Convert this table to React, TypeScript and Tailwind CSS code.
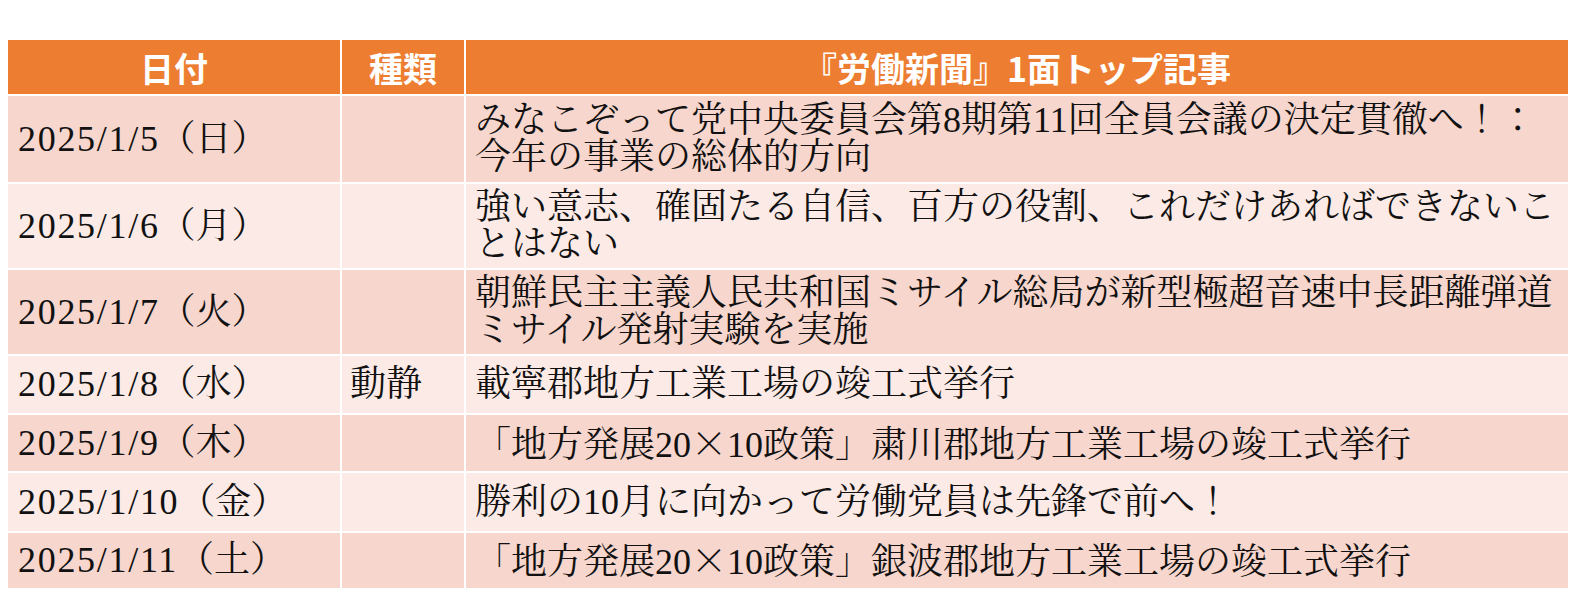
const rows = [
  {
    date: "2025/1/5",
    day: "（日）",
    kind: "",
    lines: ["みなこぞって党中央委員会第8期第11回全員会議の決定貫徹へ！：", "今年の事業の総体的方向"],
    h: "h-[86px]",
    bg: "bg-[#f7d6cd]",
  },
  {
    date: "2025/1/6",
    day: "（月）",
    kind: "",
    lines: ["強い意志、確固たる自信、百方の役割、これだけあればできないこ", "とはない"],
    h: "h-[84px]",
    bg: "bg-[#fbeae6]",
  },
  {
    date: "2025/1/7",
    day: "（火）",
    kind: "",
    lines: ["朝鮮民主主義人民共和国ミサイル総局が新型極超音速中長距離弾道", "ミサイル発射実験を実施"],
    h: "h-[84px]",
    bg: "bg-[#f7d6cd]",
  },
  {
    date: "2025/1/8",
    day: "（水）",
    kind: "動静",
    lines: ["載寧郡地方工業工場の竣工式挙行"],
    h: "h-[57px]",
    bg: "bg-[#fbeae6]",
  },
  {
    date: "2025/1/9",
    day: "（木）",
    kind: "",
    lines: ["「地方発展20×10政策」粛川郡地方工業工場の竣工式挙行"],
    h: "h-[56px]",
    bg: "bg-[#f7d6cd]",
  },
  {
    date: "2025/1/10",
    day: "（金）",
    kind: "",
    lines: ["勝利の10月に向かって労働党員は先鋒で前へ！"],
    h: "h-[58px]",
    bg: "bg-[#fbeae6]",
  },
  {
    date: "2025/1/11",
    day: "（土）",
    kind: "",
    lines: ["「地方発展20×10政策」銀波郡地方工業工場の竣工式挙行"],
    h: "h-[55px]",
    bg: "bg-[#f7d6cd]",
  },
];

// the × sign is full width in the source, so give it the CJK font
function Line({ text }: { text: string }) {
  const parts = text.split("×");
  return (
    <div className="whitespace-nowrap">
      {parts.map((p, i) => (
        <span key={i}>
          {p}
          {i < parts.length - 1 && <span className="font-['Noto_Sans_CJK_JP',sans-serif] font-light">×</span>}
        </span>
      ))}
    </div>
  );
}

export default function App() {
  return (
    <div className="w-[1577px] h-[600px] bg-white pt-[40px] pl-[8px]">
      <div className="w-[1560px] flex flex-col gap-[2px]">
        {/* header */}
        <div className="grid grid-cols-[332px_122px_1fr] gap-[2px] h-[54px] text-white font-bold text-[34px] font-['Noto_Sans_CJK_JP',sans-serif]">
          <div className="bg-[#ed7d31] flex items-center justify-center">日付</div>
          <div className="bg-[#ed7d31] flex items-center justify-center">種類</div>
          <div className="bg-[#ed7d31] flex items-center justify-center">『労働新聞』1面トップ記事</div>
        </div>
        {rows.map((row, index) => (
          <div
            key={`row-${index}`}
            className={`grid grid-cols-[332px_122px_1fr] gap-[2px] ${row.h} text-[36px] leading-[37px] text-[#111] font-['Liberation_Serif','Noto_Serif_CJK_JP','Noto_Sans_CJK_JP',serif]`}
          >
            <div className={`${row.bg} flex items-center pl-[10px] whitespace-nowrap`}>
              <span className="tracking-[1.7px]">{row.date}</span>
              <span>{row.day}</span>
            </div>
            <div className={`${row.bg} flex items-center pl-[8px]`}>{row.kind}</div>
            <div className={`${row.bg} flex flex-col justify-center pl-[9px]`}>
              {row.lines.map((line, i) => (
                <Line key={i} text={line} />
              ))}
            </div>
          </div>
        ))}
      </div>
    </div>
  );
}
